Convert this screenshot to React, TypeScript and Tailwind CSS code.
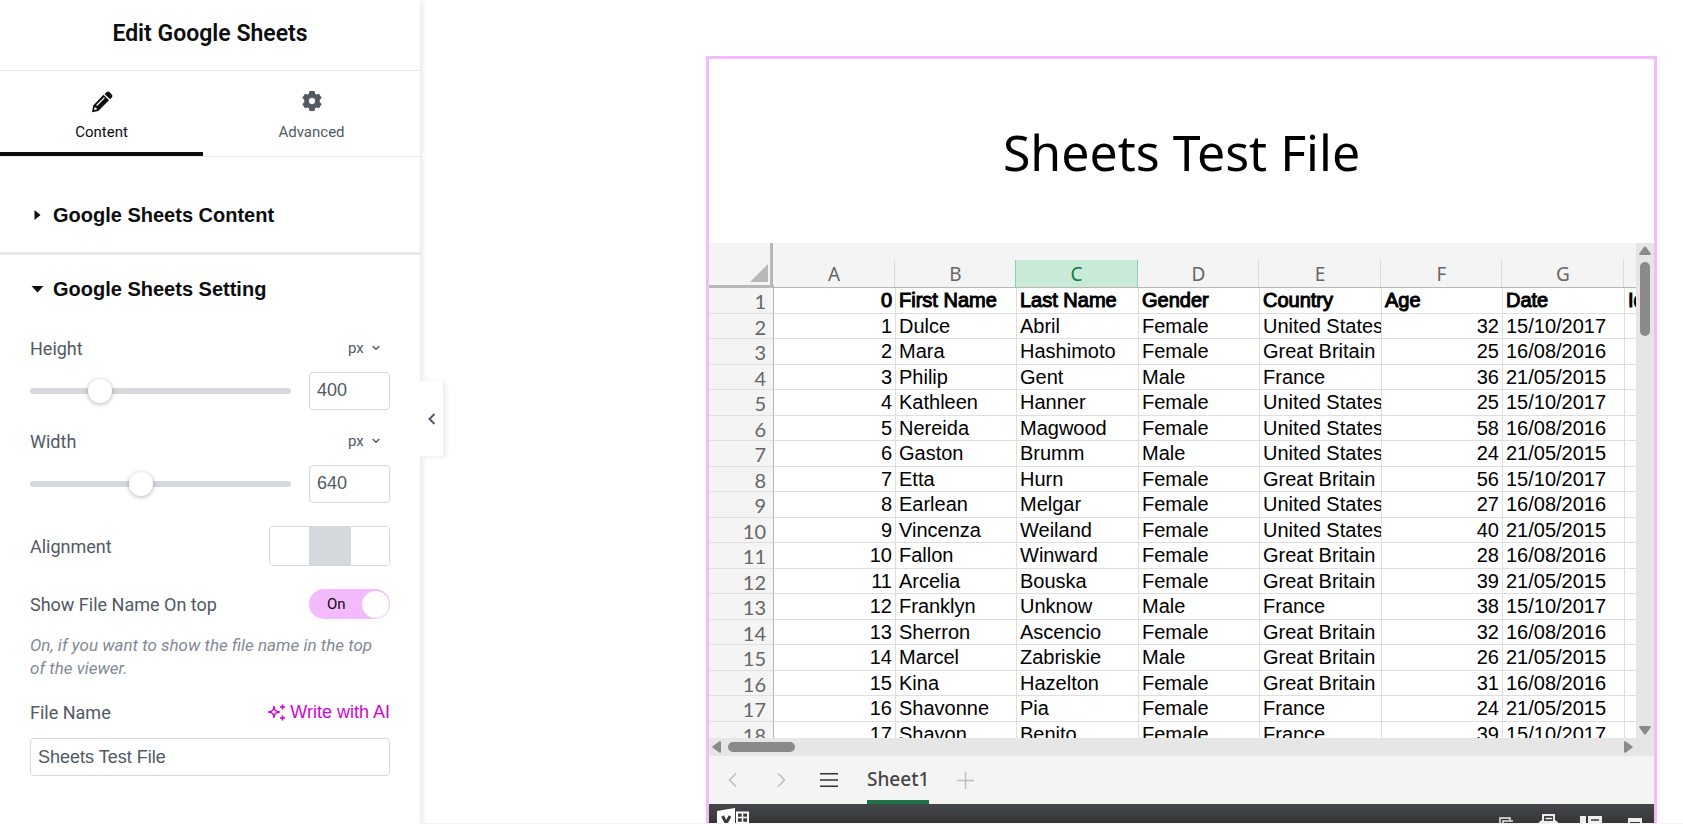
import React, { useState } from "react";

type Row = [string, string, string, string, string, string, string];

const rows: Row[] = [
  ["1", "Dulce", "Abril", "Female", "United States", "32", "15/10/2017"],
  ["2", "Mara", "Hashimoto", "Female", "Great Britain", "25", "16/08/2016"],
  ["3", "Philip", "Gent", "Male", "France", "36", "21/05/2015"],
  ["4", "Kathleen", "Hanner", "Female", "United States", "25", "15/10/2017"],
  ["5", "Nereida", "Magwood", "Female", "United States", "58", "16/08/2016"],
  ["6", "Gaston", "Brumm", "Male", "United States", "24", "21/05/2015"],
  ["7", "Etta", "Hurn", "Female", "Great Britain", "56", "15/10/2017"],
  ["8", "Earlean", "Melgar", "Female", "United States", "27", "16/08/2016"],
  ["9", "Vincenza", "Weiland", "Female", "United States", "40", "21/05/2015"],
  ["10", "Fallon", "Winward", "Female", "Great Britain", "28", "16/08/2016"],
  ["11", "Arcelia", "Bouska", "Female", "Great Britain", "39", "21/05/2015"],
  ["12", "Franklyn", "Unknow", "Male", "France", "38", "15/10/2017"],
  ["13", "Sherron", "Ascencio", "Female", "Great Britain", "32", "16/08/2016"],
  ["14", "Marcel", "Zabriskie", "Male", "Great Britain", "26", "21/05/2015"],
  ["15", "Kina", "Hazelton", "Female", "Great Britain", "31", "16/08/2016"],
  ["16", "Shavonne", "Pia", "Female", "France", "24", "21/05/2015"],
  ["17", "Shavon", "Benito", "Female", "France", "39", "15/10/2017"],
];

const titles = ["0", "First Name", "Last Name", "Gender", "Country", "Age", "Date", "Id"];
const letters = ["A", "B", "C", "D", "E", "F", "G", "H"];

function Pencil() {
  return (
    <svg width="22" height="22" viewBox="0 0 22 22" fill="currentColor" aria-hidden="true">
      <path
        fillRule="evenodd"
        d="M12.500 3.800 18 9.300 7.300 20 1 21.200 2.200 14.600ZM13 6.200 5.200 14l.9.900L13.900 7.100ZM3.700 16.200 3 19 5.800 18.400 5.500 16.700Z"
      />
      <path d="M13.600 2.900 15.800 1Q17.200 0 18.400 1L21 3.700Q22 4.900 20.900 6.200L19 8.300Z" />
    </svg>
  );
}

function Gear() {
  return (
    <svg width="20" height="20" viewBox="0 0 20 20" fill="currentColor" aria-hidden="true">
      <path
        fillRule="evenodd"
        stroke="currentColor"
        strokeWidth="1"
        strokeLinejoin="round"
        d="M7.800.5h4.400l.5 2.600 1.700 1 2.500-.9 2.300 3.900-2 1.700v2.400l2 1.700-2.300 3.900-2.500-.9-1.700 1-.5 2.600H7.800l-.5-2.600-1.700-1-2.500.9-2.300-3.900 2-1.700V8.800l-2-1.700 2.300-3.900 2.500.9 1.700-1ZM10 6.300a3.700 3.700 0 1 0 0 7.400 3.700 3.700 0 0 0 0-7.400Z"
      />
    </svg>
  );
}

function Sparkles() {
  return (
    <svg width="18" height="17" viewBox="0 0 18 17" fill="none" stroke="currentColor" aria-hidden="true">
      <path d="M6 2.500C6.500 6.400 7.600 7.500 11.500 8 7.600 8.500 6.500 9.600 6 13.500 5.500 9.600 4.400 8.500.5 8 4.400 7.500 5.500 6.400 6 2.500Z" strokeWidth="1.500" strokeLinejoin="round" />
      <path d="M14.500.5v5M12 3h5M14.500 11.500v5M12 14h5" strokeWidth="1.700" />
    </svg>
  );
}

function SliderRow({ id, label, initial }: { id: string; label: string; initial: number }) {
  const [value, setValue] = useState(initial);
  return (
    <div>
      <div className="flex h-6 items-center justify-between">
        <label htmlFor={id} className="text-[18px]">{label}</label>
        <div className="flex items-center pr-[10px]">
          <select aria-label={`${label} unit`} className="appearance-none bg-transparent pr-2 text-[15px] outline-none">
            <option>px</option>
          </select>
          <svg width="8" height="6" viewBox="0 0 8 6" fill="none" stroke="currentColor" strokeWidth="1.500" aria-hidden="true">
            <path d="M.7 1 4 4.300 7.300 1" />
          </svg>
        </div>
      </div>
      <div className="mt-3 flex items-center gap-[18px]">
        <div className="grid flex-1 items-center">
          <div className="col-start-1 row-start-1 h-[6px] rounded-full bg-[#d5d8dc]" />
          <input
            type="range"
            aria-label={`${label} slider`}
            min={0}
            max={1500}
            value={value}
            onChange={(e) => setValue(Number(e.target.value))}
            className="relative col-start-1 row-start-1 -mx-3 h-6 appearance-none bg-transparent [&::-webkit-slider-thumb]:size-6 [&::-webkit-slider-thumb]:appearance-none [&::-webkit-slider-thumb]:rounded-full [&::-webkit-slider-thumb]:bg-white [&::-webkit-slider-thumb]:shadow-[0_1px_5px_rgba(0,0,0,0.3)]"
          />
        </div>
        <input
          id={id}
          inputMode="numeric"
          value={value}
          onChange={(e) => setValue(Number(e.target.value) || 0)}
          className="h-[38px] w-[81px] rounded-[4px] border border-[#d5d8dc] px-[7px] pb-[2px] font-['Liberation_Sans',Arial,sans-serif] text-[18px] outline-none"
        />
      </div>
    </div>
  );
}

function Sidebar() {
  const [on, setOn] = useState(true);
  const [align, setAlign] = useState(1);
  return (
    <aside className="relative z-10 w-[420px] shrink-0 bg-white text-[#515962] shadow-[1px_0_8px_rgba(0,0,0,0.12)]">
      <header className="flex h-[71px] items-center justify-center border-b border-[#e6e8ea] pb-[2px]">
        <h1 className="text-[23px] font-semibold text-[#0c0d0e]">Edit Google Sheets</h1>
      </header>
      <nav className="flex h-[86px] border-b border-[#e6e8ea] text-[15px]">
        <button className="flex w-[203px] flex-col items-center gap-2 border-b-4 border-[#0c0d0e] pt-5 text-[#0c0d0e]">
          <Pencil />
          Content
        </button>
        <button className="flex flex-1 flex-col items-center gap-[10px] pt-5">
          <Gear />
          Advanced
        </button>
      </nav>
      <button className="flex h-[98px] w-full items-center border-b-[3px] border-[#e6e8ea] pt-5 pl-[30px] text-left font-['Liberation_Sans',Arial,sans-serif] text-[20px] font-bold text-[#0c0d0e]">
        <svg width="14" height="12" viewBox="0 0 14 12" fill="currentColor" aria-hidden="true"><path d="M4.500 1 10.500 6 4.500 11Z" /></svg>
        <span className="ml-[9px]">Google Sheets Content</span>
      </button>
      <button className="flex h-[68px] w-full items-center pl-[30px] text-left font-['Liberation_Sans',Arial,sans-serif] text-[20px] font-bold text-[#0c0d0e]">
        <svg width="14" height="12" viewBox="0 0 14 12" fill="currentColor" aria-hidden="true"><path d="M1.500 3h12l-6 6.500Z" /></svg>
        <span className="ml-[9px]">Google Sheets Setting</span>
      </button>
      <div className="px-[30px] pt-[13px]">
        <SliderRow id="height" label="Height" initial={400} />
        <div className="h-[19px]" />
        <SliderRow id="width" label="Width" initial={640} />
        <div className="mt-[23px] flex items-center justify-between">
          <span className="text-[18px]">Alignment</span>
          <div role="group" aria-label="Alignment" className="grid h-10 w-[121px] grid-cols-[39px_42px_1fr] overflow-hidden rounded-[4px] border border-[#d5d8dc]">
            {["Left", "Center", "Right"].map((name, i) => (
              <button key={name} aria-label={name} onClick={() => setAlign(i)} className={i === align ? "bg-[#d5d8dc]" : "bg-white"} />
            ))}
          </div>
        </div>
        <div className="mt-[23px] flex items-center justify-between">
          <label htmlFor="show-name" className="text-[18px]">Show File Name On top</label>
          <button
            id="show-name"
            role="switch"
            aria-checked={on}
            onClick={() => setOn(!on)}
            className="flex h-[30px] w-[81px] items-center justify-between rounded-full bg-[#f3bafd] pr-px pl-[18px] text-[15px] text-[#0c0d0e]"
          >
            <span>{on ? "On" : "Off"}</span>
            <span className="size-[27px] rounded-full bg-white" />
          </button>
        </div>
        <p className="mt-[15px] text-[17px] leading-[23px] text-[#818a96] italic">
          On, if you want to show the file name in the top of the viewer.
        </p>
        <div className="mt-5 flex h-6 items-center justify-between">
          <label htmlFor="file-name" className="text-[18px]">File Name</label>
          <button className="flex items-center gap-1 font-['Liberation_Sans',Arial,sans-serif] text-[18px] text-[#d004d4]">
            <Sparkles />
            Write with AI
          </button>
        </div>
        <input
          id="file-name"
          defaultValue="Sheets Test File"
          className="mt-[14px] h-[38px] w-full rounded-[4px] border border-[#d5d8dc] px-[7px] font-['Liberation_Sans',Arial,sans-serif] text-[18px] outline-none"
        />
      </div>
      <button
        aria-label="Collapse panel"
        className="absolute top-[381px] left-full flex h-[75px] w-[23px] items-center justify-center bg-white shadow-[3px_1px_5px_rgba(0,0,0,0.08)]"
      >
        <svg width="8" height="12" viewBox="0 0 8 12" fill="none" stroke="currentColor" strokeWidth="2" aria-hidden="true"><path d="M6.500 1 1.500 6l5 5" /></svg>
      </button>
    </aside>
  );
}

function Grid() {
  const line = "border-r border-b border-[#dfdfdf]";
  return (
    <div className="min-w-0 flex-1 overflow-hidden bg-white">
      <table className="w-[1040px] table-fixed border-separate border-spacing-0 font-['Liberation_Sans',Arial,sans-serif] text-[20px] text-black">
        <colgroup>
          <col className="w-[65px]" />
          <col className="w-[122px]" />
          <col className="w-[121px]" />
          <col className="w-[122px]" />
          <col className="w-[121px]" />
          <col className="w-[122px]" />
          <col className="w-[121px]" />
          <col className="w-[122px]" />
          <col />
        </colgroup>
        <thead className="bg-[#f4f4f4] font-['Noto_Sans',sans-serif] text-[19px] text-[#666]">
          <tr className="h-[45px]">
            <th className="p-0 align-top">
              <div className="flex h-[42px] w-16 items-end justify-end border-r-[3px] border-[#b8b8b8] pr-[2px] pb-[3px]">
                <svg width="18" height="18" viewBox="0 0 18 18" aria-hidden="true"><path d="M18 0V18H0Z" fill="#b8b8b8" /></svg>
              </div>
              <div className="h-[3px] bg-[#b8b8b8]" />
            </th>
            {letters.map((l) => (
              <th key={l} className="border-b border-[#b8b8b8] p-0 pr-px pt-[17px] font-normal">
                <div
                  className={
                    l === "C"
                      ? "-ml-px h-[27px] border-r border-[#8fceab] bg-[#caead8] text-[#107c41]"
                      : l === "B"
                        ? "h-[27px] border-r border-[#8fceab]"
                        : "h-[27px] border-r border-[#dadada]"
                  }
                >
                  {l}
                </div>
              </th>
            ))}
          </tr>
        </thead>
        <tbody>
          <tr className="h-[26px]">
            <th className="border-r border-b border-r-[#b8b8b8] border-b-[#dfdfdf] bg-[#f4f4f4] p-0 pr-[7px] text-right align-top font-['Lato',sans-serif] font-normal text-[#666]">
              <span className="block h-6 leading-[26px]">1</span>
            </th>
            {titles.map((t, i) => (
              <th key={t} className={`${line} overflow-hidden p-0 px-[3px] align-top font-normal whitespace-nowrap [-webkit-text-stroke:1px_black] ${i === 0 ? "text-right" : "text-left"}`}>
                <span className="block h-6 leading-6">{t}</span>
              </th>
            ))}
          </tr>
          {rows.map((r, n) => (
            <tr key={r[0]} className={n % 2 ? "h-[26px]" : "h-[25px]"}>
              <th className="border-r border-b border-r-[#b8b8b8] border-b-[#dfdfdf] bg-[#f4f4f4] p-0 pr-[7px] text-right align-top font-['Lato',sans-serif] font-normal text-[#666]">
                <span className="block h-6 leading-[26px]">{n + 2}</span>
              </th>
              {r.map((c, i) => (
                <td key={i} className={`${line} overflow-hidden p-0 px-[3px] align-top whitespace-nowrap ${i === 0 || i === 5 ? "text-right" : "text-left"}`}>
                  <span className="block h-6 leading-6">{c}</span>
                </td>
              ))}
              <td className={line} />
            </tr>
          ))}
        </tbody>
      </table>
    </div>
  );
}

function Viewer() {
  return (
    <section className="border-[3px] border-[#f3bafd]">
      <h2 className="flex h-[184px] items-center justify-center pt-[2px] font-['Noto_Sans',sans-serif] text-[50px] text-black">Sheets Test File</h2>
      <div className="flex h-[495px]">
        <Grid />
        <div className="flex w-[18px] shrink-0 flex-col items-center bg-[#e6e6e6] pt-[3px] pb-[3px] text-[#8a8a8a]">
          <svg width="12" height="9" viewBox="0 0 12 9" fill="currentColor" aria-hidden="true"><path d="M5 1Q6-.5 7 1L11.700 7.500Q12 9 11 9H1Q0 9 .3 7.500Z" /></svg>
          <div className="mt-[7px] h-[74px] w-[10px] rounded-full bg-[#8a8a8a]" />
          <svg className="mt-auto" width="12" height="9" viewBox="0 0 12 9" fill="currentColor" aria-hidden="true"><path d="M5 8Q6 9.500 7 8L11.700 1.500Q12 0 11 0H1Q0 0 .3 1.500Z" /></svg>
        </div>
      </div>
      <div className="flex h-[18px] items-center bg-[#e6e6e6] pr-[21px] pl-[3px] text-[#8a8a8a]">
        <svg width="9" height="12" viewBox="0 0 9 12" fill="currentColor" aria-hidden="true"><path d="M1 5Q-.5 6 1 7L7.500 11.700Q9 12 9 11V1Q9 0 7.500.3Z" /></svg>
        <div className="ml-[7px] h-[10px] w-[67px] rounded-full bg-[#8a8a8a]" />
        <svg className="ml-auto" width="9" height="12" viewBox="0 0 9 12" fill="currentColor" aria-hidden="true"><path d="M8 5Q9.500 6 8 7L1.500 11.700Q0 12 0 11V1Q0 0 1.500.3Z" /></svg>
      </div>
      <div className="flex h-12 items-center bg-[#f4f4f4] pl-[19px] text-[#bdbdbd]">
        <button aria-label="Previous sheet">
          <svg width="9" height="14" viewBox="0 0 9 14" fill="none" stroke="currentColor" strokeWidth="1.500"><path d="M8 .5 1.500 7 8 13.500" /></svg>
        </button>
        <button aria-label="Next sheet" className="ml-10">
          <svg width="9" height="14" viewBox="0 0 9 14" fill="none" stroke="currentColor" strokeWidth="1.500"><path d="M1 .5 7.500 7 1 13.500" /></svg>
        </button>
        <button aria-label="All sheets" className="ml-[34px]">
          <svg width="18" height="16" viewBox="0 0 18 16" fill="#333"><path d="M0 1h18v1.500H0ZM0 7.300h18v1.500H0ZM0 13.500h18V15H0Z" /></svg>
        </button>
        <button className="ml-[29px] flex h-12 items-center border-b-4 border-[#217346] pt-[3px] font-['Noto_Sans',sans-serif] text-[19px] font-medium text-[#444]">Sheet1</button>
        <button aria-label="Add sheet" className="ml-[28px]">
          <svg width="17" height="17" viewBox="0 0 17 17" fill="none" stroke="currentColor" strokeWidth="1.500"><path d="M8.500 0v17M0 8.500h17" /></svg>
        </button>
      </div>
      <footer className="flex h-9 items-start bg-linear-to-b from-[#44484b] from-0% to-[#373739] to-50% pr-2 pl-2 text-[#eee]">
        <svg className="mt-1" width="32" height="30" viewBox="0 0 32 30" aria-hidden="true">
          <path d="M0 3 18 0V30L0 27Z" fill="#fff" />
          <path d="M20 4.500H31V26H20Z" fill="none" stroke="#fff" strokeWidth="2" />
          <path d="M20 9.500H31M20 14.500H31M20 19.500H31M25.500 4V26" stroke="#fff" strokeWidth="1.500" />
          <path d="m5.500 8 7.500 14M13 8 5.500 22" stroke="#3a3b3d" strokeWidth="3" />
        </svg>
        <div className="ml-auto flex gap-[21px]">
          <button aria-label="Copy" className="mt-[13px]">
            <svg width="18" height="18" viewBox="0 0 18 18" fill="none" stroke="currentColor" strokeWidth="1.500"><path d="M1 12V1H11V3M4 14V4H14M8 16V7.500H15V16Z" /></svg>
          </button>
          <button aria-label="Print" className="mt-[9px]">
            <svg width="21" height="20" viewBox="0 0 21 20"><path d="M0 11Q0 8 4 6H17Q21 8 21 11V17H0Z" fill="#eee" /><path d="M5 8V1H16V8Z" fill="#3e4042" stroke="#eee" strokeWidth="2" /><path d="M7.500 4.500H14" stroke="#eee" strokeWidth="1.500" /></svg>
          </button>
          <button aria-label="Details" className="mt-[10px]">
            <svg width="22" height="20" viewBox="0 0 22 20"><path d="M0 1H6V19H0ZM8 1H22V19H8Z" fill="#eee" /><path d="M11 5H19M11 9H19" stroke="#3a3b3d" strokeWidth="1.500" /></svg>
          </button>
          <button aria-label="Full screen" className="mt-[12px] mr-1 ml-[5px]">
            <svg width="14" height="16" viewBox="0 0 14 16"><path d="M1 1H13V15H1Z" fill="none" stroke="#eee" strokeWidth="2" /><path d="M0 0H14V4H0Z" fill="#eee" /></svg>
          </button>
        </div>
      </footer>
    </section>
  );
}

export default function App() {
  return (
    <div className="flex h-screen overflow-hidden bg-[#fefefe] font-['Roboto',sans-serif]">
      <Sidebar />
      <main className="mb-px min-w-0 flex-1 overflow-hidden bg-white pt-14 pr-[26px] pl-[286px] shadow-[0_1px_0_#f4f4f4]">
        <Viewer />
      </main>
    </div>
  );
}
